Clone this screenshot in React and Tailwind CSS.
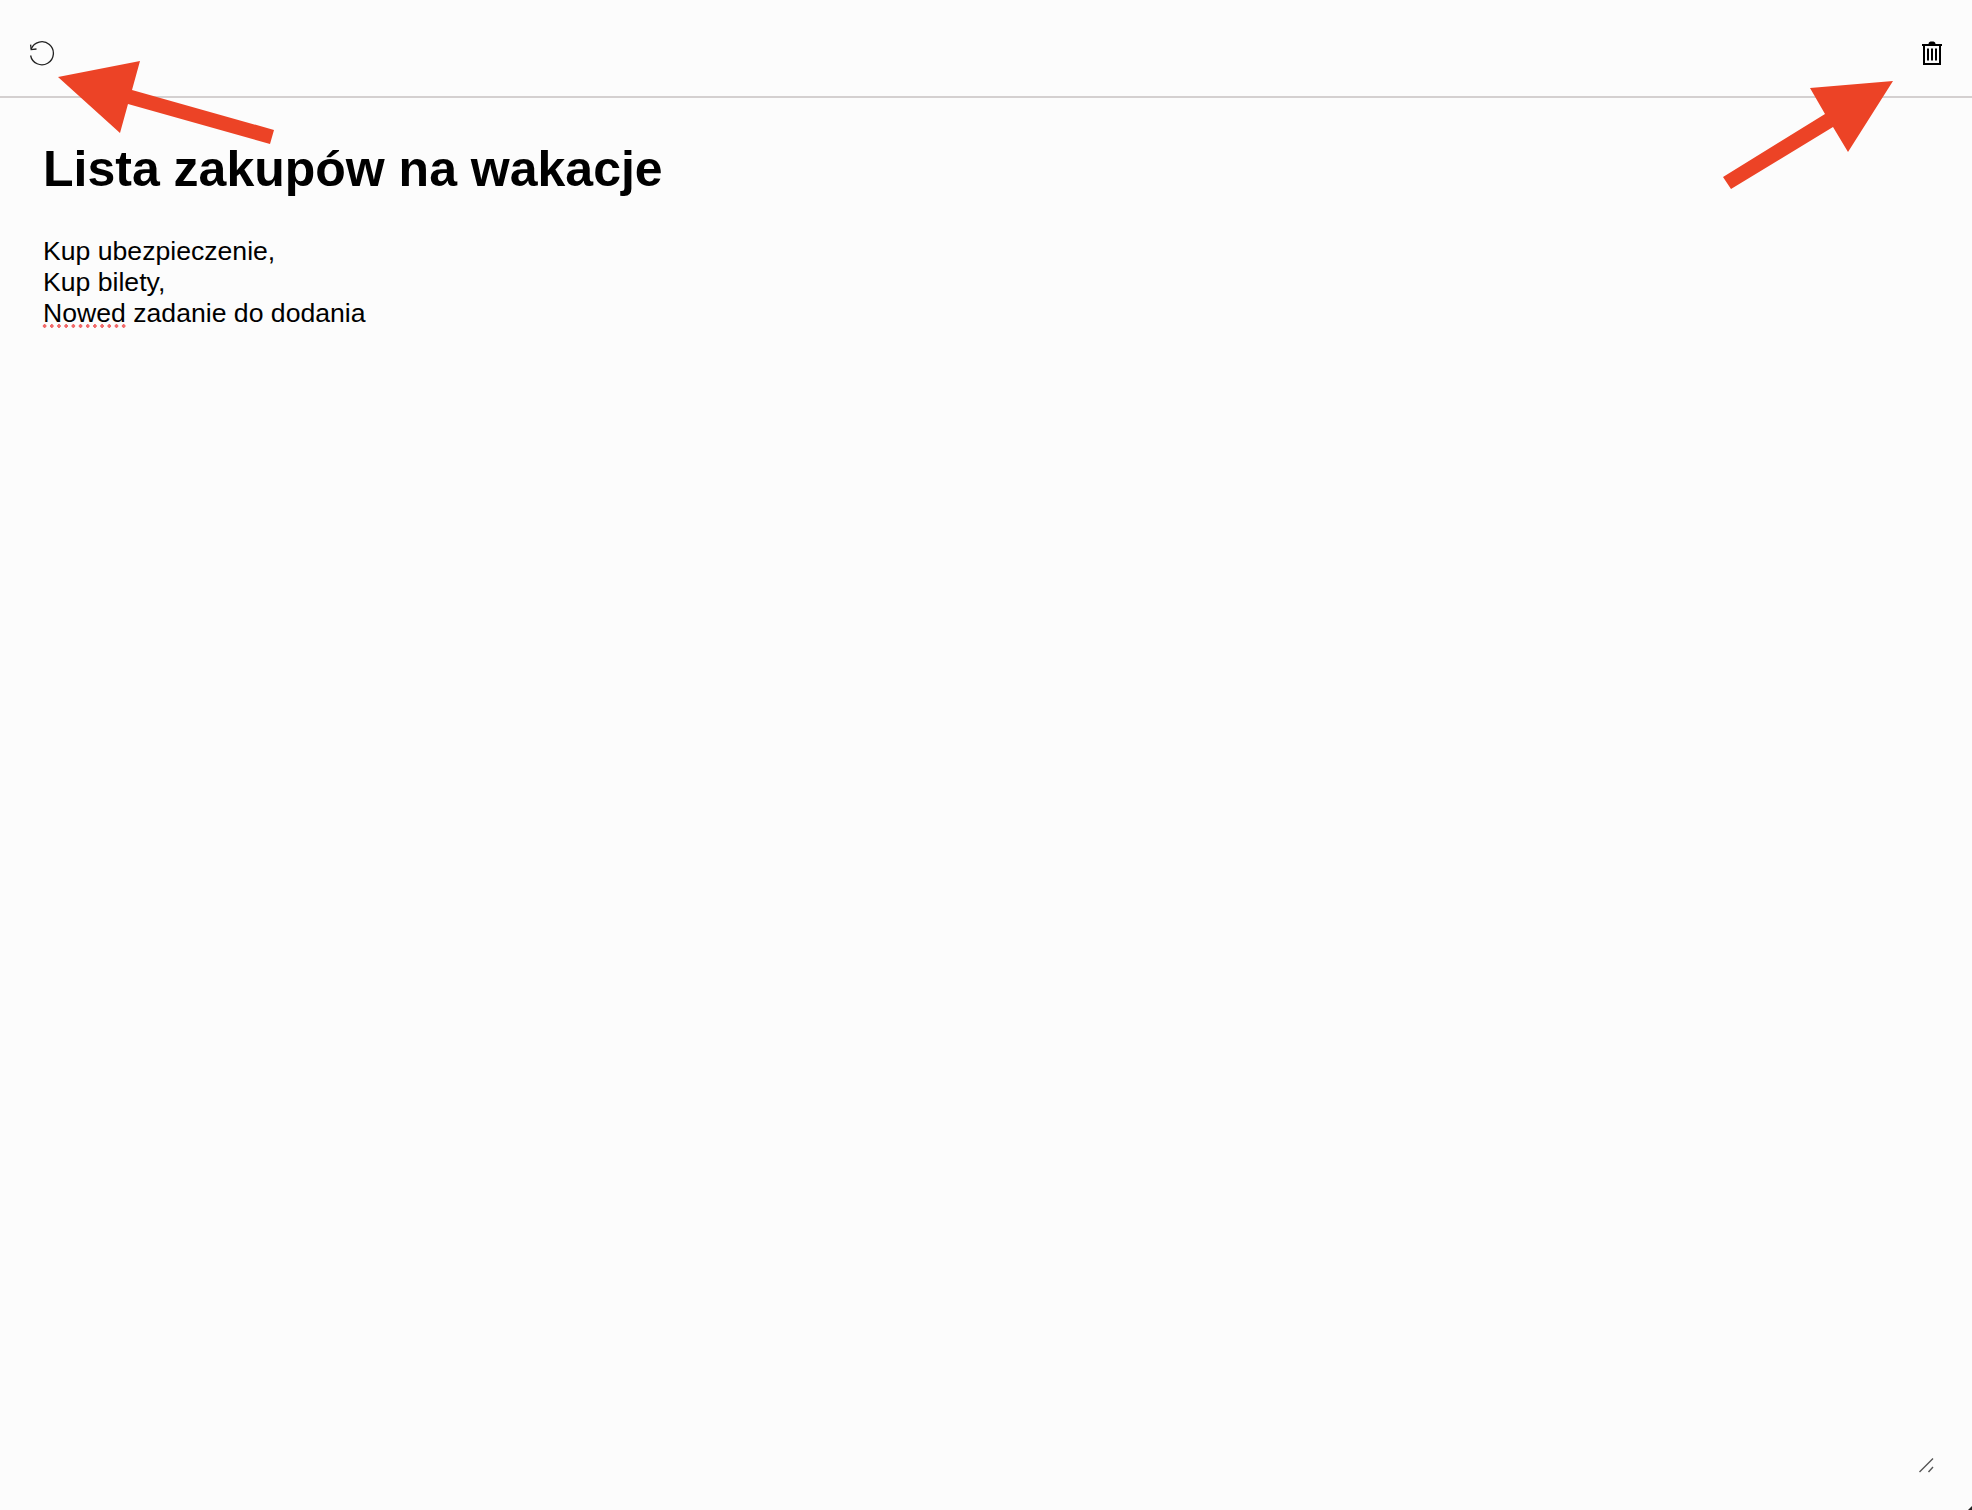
export default function App() {
  return (
    <div className="relative h-[1510px] w-[1972px] overflow-hidden bg-[#fcfcfc] text-black font-['Liberation_Sans',Arial,sans-serif]">
      <header className="flex h-[98px] items-start justify-between border-b-2 border-[#d4d0d0] pl-[28px] pr-[30px] pt-[40px]">
        <svg width="28" height="28" viewBox="0 0 28 28" fill="none" stroke="#222" strokeWidth="1.300" className="mt-[1px]">
          <path d="M3.200 8 A11.500 11.500 0 1 1 2.600 14.500" />
          <path d="M2.600 3.600 L3.200 8.600 L8.500 8" />
        </svg>
        <svg width="20" height="24" viewBox="0 0 20 24" className="mt-[1px]">
          <path d="M0 3h20v2H0z M6.500 3c0-2 1.500-2.500 3.500-2.500s3.500 .5 3.500 2.500z" fill="#000" />
          <path d="M2 5v18h16v-18" fill="none" stroke="#000" strokeWidth="2" />
          <path d="M6 7.500v12M10 7.500v12M14 7.500v12" fill="none" stroke="#000" strokeWidth="2" />
        </svg>
      </header>
      <main className="pl-[43px] pt-[42px]">
        <h1 className="text-[50px] font-bold leading-[58px]">Lista zakupów na wakacje</h1>
        <div className="mt-[38px] text-[26.620px] leading-[31px]">
          <div>Kup ubezpieczenie,</div>
          <div>Kup bilety,</div>
          <div>
            <span className="relative inline-block">
              Nowed
              <span className="absolute bottom-[1px] left-[-2px] h-[4px] w-[86px] bg-[radial-gradient(circle,#f26a6a_1.600px,transparent_1.900px)] bg-[length:7.200px_4px]" />
            </span>{" "}
            zadanie do dodania
          </div>
        </div>
      </main>
      <svg className="absolute left-0 top-0" width="1972" height="200" viewBox="0 0 1972 200" fill="#ec4326">
        <polygon points="58,77 140,61 132,90 274,130 270,144 128,104 120,133" />
        <polygon points="1893,81 1810,88 1825,114 1723,177 1731,189 1833,127 1848,152" />
      </svg>
      <svg className="absolute bottom-0 right-0" width="60" height="60" viewBox="1912 1450 60 60" fill="none">
        <path d="M1919.500 1472 L1933 1458.500 M1928.500 1472 L1933 1467" stroke="#555" strokeWidth="1.400" />
        <path d="M1968 1510 L1972 1506 V1510 Z" fill="#222" />
      </svg>
    </div>
  );
}
